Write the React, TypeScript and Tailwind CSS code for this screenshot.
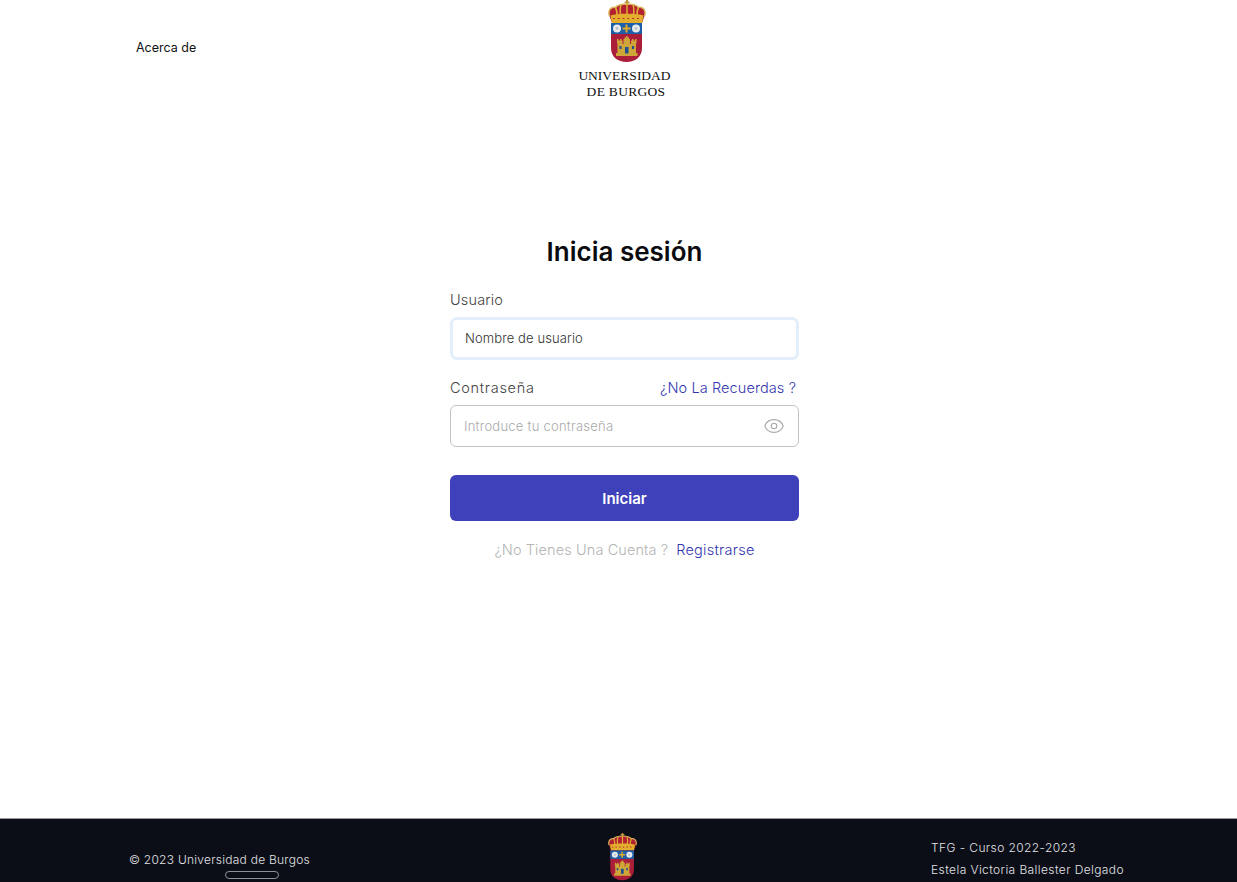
import React from 'react'
import { Eye } from 'lucide-react'

// Escudo de la universidad
function Crest({ className }: { className?: string }) {
  return (
    <svg viewBox="0 0 38 63" className={className}>
      {/* cruz */}
      <path d="M18 0h2v1.400h1.400v1.600H20v3h-2V3h-1.400V1.400H18z" fill="#b9973f" />
      {/* corona */}
      <path d="M1.500 16C-.5 10.500 3 6.500 7.500 7.500 10 4.500 14 4 19 4s9 .5 11.500 3.500C35 6.500 38.500 10.500 36.500 16L34 23H4z" fill="#b3202f" />
      <path d="M1.500 16C-.5 10.500 3 6.500 7.500 7.500 10 4.500 14 4 19 4s9 .5 11.500 3.500C35 6.500 38.500 10.500 36.500 16" fill="none" stroke="#d8b85f" strokeWidth="1.500" />
      <path d="M7.500 7.500c1.500 3 2 6 1 9.500M30.500 7.500c-1.500 3-2 6-1 9.500M19 4v13M13 5c-1 3-1 8 0 12M25 5c1 3 1 8 0 12" fill="none" stroke="#e0b035" strokeWidth="1.500" />
      <path d="M2.500 15.500c5-2.500 28-2.500 33 0L34 23H4z" fill="#e3ad2e" />
      <path d="M5 18.500h28" stroke="#b3202f" strokeWidth="1.200" strokeDasharray="1.800 3" />
      {/* escudo */}
      <path d="M3 23h31v25c0 9-7 14-15.500 14S3 57 3 48z" fill="#ab1e3a" />
      <rect x="3" y="23" width="31" height="11" fill="#1c5fa8" />
      <circle cx="9" cy="28.500" r="4" fill="#e6e9ee" />
      <circle cx="9" cy="28.500" r="1.400" fill="#b9c2cd" />
      <circle cx="28" cy="28.500" r="4" fill="#e6e9ee" />
      <circle cx="28" cy="28.500" r="1.400" fill="#b9c2cd" />
      <path d="M17.500 24.500h2v3h3v2h-3v3h-2v-3h-3v-2h3z" fill="#e0a92c" />
      {/* castillo */}
      <path d="M9 39h1.500v1.500H12V39h1.500v1.500h1V44h1v-5h1v-1.500H18V36h1.500v1.500H21V39h1v5h1v-3.500h1V39h1.500v1.500H27V39h1.500v4.500H28V53h1.500v3H8v-3h1.500v-9.500H9z" fill="#cfa53a" />
      <rect x="17" y="47" width="3.500" height="6.500" fill="#1c4f8f" />
      <rect x="11.500" y="46" width="2" height="3" fill="#1c4f8f" />
      <rect x="24" y="46" width="2" height="3" fill="#1c4f8f" />
    </svg>
  )
}

export default function App() {
  return (
    <div className="h-[882px] overflow-hidden bg-white">
      <div className="w-[1249px] h-[882px] flex flex-col font-['Inter',sans-serif]">
        {/* Header */}
        <header className="h-[100px] shrink-0 relative flex justify-center">
          <a className="absolute left-[136px] top-[40px] text-[12.500px] leading-[15px] text-[#111]">Acerca de</a>
          <div className="flex flex-col items-center">
            <Crest className="ml-[5px] w-[38px] h-[63px]" />
            <div className="mt-[5px] font-['Liberation_Serif',serif] text-[13.500px] leading-[16px] text-[#111] text-center">
              UNIVERSIDAD
              <br />
              <span className="ml-[3px] tracking-[0.3px]">DE BURGOS</span>
            </div>
          </div>
        </header>

        {/* Formulario */}
        <main className="flex-1 flex flex-col items-center pt-[134px]">
          <div className="w-[349px] flex flex-col">
            <h1 className="text-[26px] leading-[36px] font-semibold text-[#0b0b0f] text-center">Inicia sesión</h1>
            <label className="mt-[20px] text-[14.500px] font-light tracking-[0.15px] leading-[20px] text-[#444]">Usuario</label>
            <div className="mt-[7px] h-[43px] rounded-[7px] border-[3px] border-[#e3eefb] flex items-center px-[12px] text-[13px] font-light tracking-[0.1px] text-[#333]">
              Nombre de usuario
            </div>
            <div className="mt-[18px] flex justify-between items-center pr-[3px]">
              <label className="text-[14.500px] font-light tracking-[0.7px] leading-[20px] text-[#444]">Contraseña</label>
              <a className="text-[14.500px] font-light tracking-[0.1px] leading-[20px] text-[#3336b0]">¿No La Recuerdas ?</a>
            </div>
            <div className="mt-[7px] h-[42px] rounded-[6px] border border-[#c4c4c4] flex items-center justify-between pl-[13px] pr-[13px] text-[13px] font-light tracking-[0.25px] text-[#aaa]">
              <span className="pt-[1px]">Introduce tu contraseña</span>
              <Eye className="w-[22px] h-[22px] text-[#a8a8a8]" strokeWidth={1.2} />
            </div>
            <button className="mt-[28px] h-[46px] pt-[2px] rounded-[6px] bg-[#3f41ba] text-white text-[15px] font-semibold">Iniciar</button>
            <p className="mt-[19px] text-center text-[14.500px] font-light tracking-[0.1px] leading-[20px] text-[#b4b4b4]">
              ¿No Tienes Una Cuenta ?<a className="ml-[8px] tracking-[0.25px] text-[#3336b0]">Registrarse</a>
            </p>
          </div>
        </main>

        {/* Footer */}
        <footer className="h-[64px] shrink-0 bg-[#0b0e17] border-t border-[#9a9a9a] relative flex justify-between text-[12px] font-light text-[#e2e2e5] pl-[129px] pr-[125px] overflow-hidden">
          <div className="pt-[33px]">
            <p className="leading-[16px] tracking-[0.25px]">© 2023 Universidad de Burgos</p>
            <div className="mt-[3px] ml-[96px] w-[54px] h-[8px] rounded-full border border-[#8f8f99]" />
          </div>
          <Crest className="absolute left-[608px] top-[14px] w-[29px] h-[48px]" />
          <div className="pt-[19px] tracking-[0.4px]">
            <p className="leading-[20px]">TFG - Curso 2022-2023</p>
            <p className="mt-[2px] leading-[20px]">Estela Victoria Ballester Delgado</p>
          </div>
        </footer>
      </div>
    </div>
  )
}
